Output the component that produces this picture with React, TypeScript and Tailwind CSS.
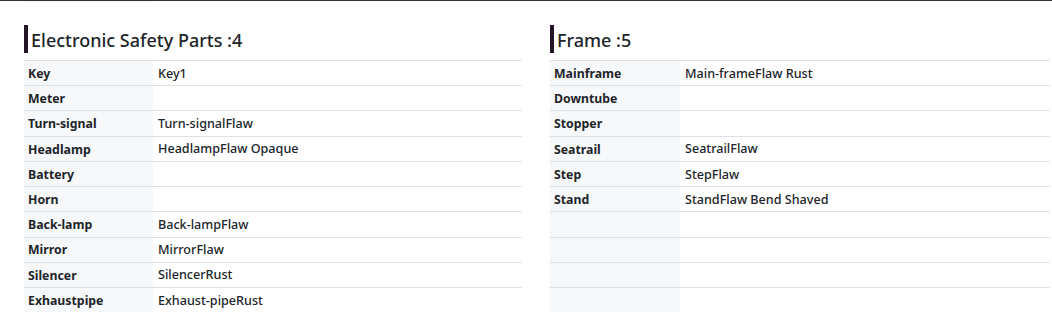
import React from "react";

type Row = [string, string];

const left: Row[] = [
  ["Key", "Key1"],
  ["Meter", ""],
  ["Turn-signal", "Turn-signalFlaw"],
  ["Headlamp", "HeadlampFlaw Opaque"],
  ["Battery", ""],
  ["Horn", ""],
  ["Back-lamp", "Back-lampFlaw"],
  ["Mirror", "MirrorFlaw"],
  ["Silencer", "SilencerRust"],
  ["Exhaustpipe", "Exhaust-pipeRust"],
];

const right: Row[] = [
  ["Mainframe", "Main-frameFlaw Rust"],
  ["Downtube", ""],
  ["Stopper", ""],
  ["Seatrail", "SeatrailFlaw"],
  ["Step", "StepFlaw"],
  ["Stand", "StandFlaw Bend Shaved"],
  ["", ""],
  ["", ""],
  ["", ""],
  ["", ""],
];

function Section({ title, rows, widthClass, keyClass }: { title: string; rows: Row[]; widthClass: string; keyClass: string }) {
  return (
    <div className={widthClass}>
      <div className="flex items-center h-[28px] border-l-4 border-[#231526] pl-[3px] mb-[7px]">
        <span className="text-[18px] font-medium leading-none text-[#212529] pt-[1px]">{title}</span>
      </div>
      <div>
        {rows.map(([k, v], i) => (
          <div key={i} className="flex h-[25.22px] border-t border-[#dee2e6] text-[#212529]">
            <div className={`${keyClass} shrink-0 bg-[#f7f8fa] font-bold text-[12.3px] pl-[4px] pt-[2px] flex items-center`}>{k}</div>
            <div className="flex-1 pl-[5px] pt-[2px] text-[12.6px] font-medium flex items-center">{v}</div>
          </div>
        ))}
      </div>
    </div>
  );
}

export default function App() {
  return (
    <div className="w-[1052px] h-[324px] bg-white overflow-hidden" style={{ fontFamily: '"Noto Sans", "Open Sans", sans-serif' }}>
      <div className="border-t border-[#333333]" />
      <div className="flex h-[2px] pl-[24px]">
        <div className="w-[129px] bg-[#f7f8fa]" />
      </div>
      <div className="flex pl-[24px] pt-[22px] gap-[28px]">
        <Section title="Electronic Safety Parts :4" rows={left} widthClass="w-[498px]" keyClass="w-[129px]" />
        <Section title="Frame :5" rows={right} widthClass="w-[500px]" keyClass="w-[130px]" />
      </div>
    </div>
  );
}
